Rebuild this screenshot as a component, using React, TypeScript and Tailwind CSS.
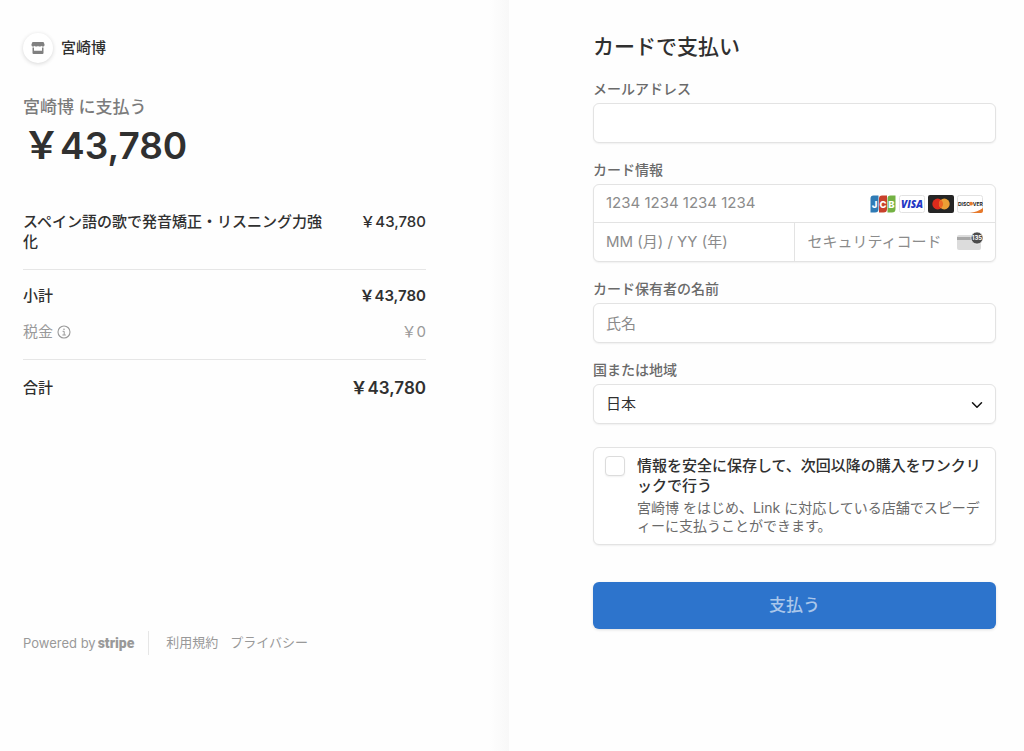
import React, { useState } from 'react';
import { ChevronDown } from 'lucide-react';

const fieldClass =
  'w-full h-10 rounded-md border border-[#e3e3e3] bg-white px-3 text-[15px] text-[#303030] shadow-[0_1px_2px_rgba(0,0,0,0.06)] outline-none placeholder:text-[#8b8b8b]';
const labelClass = 'block mb-1 text-[14px] leading-5 font-medium text-[#6a6a6a]';

const StoreIcon: React.FC = () => (
  <svg viewBox="0 0 14 14" className="w-[14px] h-[14px]" aria-hidden="true">
    <path
      d="M1.500 1h11l1 2.200V4c0 .9-.7 1.600-1.600 1.600-.7 0-1.300-.3-1.600-.9-.3.6-.9.9-1.600.9s-1.400-.3-1.700-.9c-.3.6-1 .9-1.700.9s-1.300-.3-1.600-.9c-.3.6-.9.9-1.600.9C1.200 5.600.5 4.900.5 4v-.8L1.500 1Z"
      fill="#808080"
    />
    <path d="M1.500 6.600H3v3.200h8V6.600h1.500V12a1 1 0 0 1-1 1h-9a1 1 0 0 1-1-1V6.600Z" fill="#808080" />
  </svg>
);

const InfoIcon: React.FC = () => (
  <svg viewBox="0 0 14 14" className="w-[14px] h-[14px]" fill="none" stroke="#999" aria-hidden="true">
    <circle cx="7" cy="7" r="6" strokeWidth="1.1" />
    <path d="M5.600 6.300h1.600v3.600M5.400 10h3.400" strokeWidth="1" />
    <circle cx="7" cy="4.200" r=".8" fill="#999" stroke="none" />
  </svg>
);

const JcbIcon: React.FC = () => (
  <svg viewBox="0 0 26 18" className="w-[26px] h-[18px]" role="img" aria-label="JCB">
    <path d="M3.500.5h5V14A3.500 3.500 0 0 1 5 17.500H.5V3.500a3 3 0 0 1 3-3Z" fill="#2f7bb5" />
    <path d="M12 .5h5V14a3.500 3.500 0 0 1-3.500 3.500H9v-14a3 3 0 0 1 3-3Z" fill="#c8412b" />
    <path d="M20.500.5h5V14a3.500 3.500 0 0 1-3.500 3.500h-4.500v-14a3 3 0 0 1 3-3Z" fill="#73b143" />
    <g fill="#fff" fontFamily="Inter, sans-serif" fontWeight="800" fontSize="9.500" textAnchor="middle">
      <text x="4.500" y="12.500">J</text>
      <text x="13" y="12.500">C</text>
      <text x="21.500" y="12.500">B</text>
    </g>
  </svg>
);

const VisaIcon: React.FC = () => (
  <svg viewBox="0 0 26 18" className="w-[26px] h-[18px]" role="img" aria-label="Visa">
    <rect x=".5" y=".5" width="25" height="17" rx="2" fill="#fff" stroke="#e2e2e2" />
    <text x="13" y="12.700" fill="#2337c4" fontFamily="Open Sans, sans-serif" fontWeight="800" fontStyle="italic" fontSize="10" textAnchor="middle">
      VISA
    </text>
  </svg>
);

const MastercardIcon: React.FC = () => (
  <svg viewBox="0 0 26 18" className="w-[26px] h-[18px]" role="img" aria-label="Mastercard">
    <rect width="26" height="18" rx="2" fill="#252525" />
    <circle cx="9.700" cy="9" r="5.400" fill="#dc2b1c" />
    <circle cx="16.300" cy="9" r="5.400" fill="#eb9f35" />
    <path d="M13 4.730a5.400 5.400 0 0 1 0 8.540 5.400 5.400 0 0 1 0-8.540Z" fill="#ec6523" />
  </svg>
);

const DiscoverIcon: React.FC = () => (
  <svg viewBox="0 0 26 18" className="w-[26px] h-[18px]" role="img" aria-label="Discover">
    <rect x=".5" y=".5" width="25" height="17" rx="2" fill="#fff" stroke="#e2e2e2" />
    <path d="M26 13v3a2 2 0 0 1-2 2H13c5-.8 9.500-2.400 13-5Z" fill="#e7792b" />
    <g fill="#222" fontFamily="Inter, sans-serif" fontWeight="700" fontSize="5">
      <text x="1" y="10.500">DISC</text>
      <text x="15.800" y="10.500">VER</text>
    </g>
    <circle cx="14" cy="8.700" r="1.900" fill="#e7792b" />
  </svg>
);

const CvcIcon: React.FC = () => (
  <svg viewBox="0 0 28 20" className="w-7 h-5" aria-hidden="true">
    <rect x="1" y="3" width="24" height="15" rx="2" fill="#dcdcdc" />
    <rect x="1" y="5" width="24" height="3" fill="#a8a8a8" />
    <circle cx="21" cy="6" r="6" fill="#4d4d4d" stroke="#fff" strokeWidth=".6" />
    <text x="21" y="8.300" fill="#fff" fontFamily="Inter, sans-serif" fontWeight="700" fontSize="6" textAnchor="middle">
      135
    </text>
  </svg>
);

const OrderSummary: React.FC = () => (
  <section className="flex flex-col pt-8 pb-24 pl-[23px] pr-[83px] bg-[linear-gradient(to_left,#f8f8f8,#fefefe_20px)]">
    <header className="flex items-center gap-2 h-8">
      <span className="flex items-center justify-center w-[30px] h-[30px] rounded-full bg-white shadow-[0_1px_4px_rgba(0,0,0,0.16)]">
        <StoreIcon />
      </span>
      <span className="text-[15px] font-medium text-[#303030]">宮崎博</span>
    </header>

    <p className="mt-[31px] text-[17px] leading-6 font-medium text-[#7b7b7b]">宮崎博 に支払う</p>
    <p className="mt-[5px] text-[37px] leading-[44px] font-semibold text-[#303030]">￥43,780</p>

    <div className="mt-11 flex gap-6 justify-between pb-[17px] border-b border-[#e6e6e6] text-[15px] leading-5 font-medium text-[#303030]">
      <span>スペイン語の歌で発音矯正・リスニング力強化</span>
      <span className="shrink-0">￥43,780</span>
    </div>

    <div className="pt-4 pb-[17px] border-b border-[#e6e6e6] text-[15px] leading-5">
      <div className="flex justify-between text-[#303030]">
        <span className="font-medium">小計</span>
        <span className="font-semibold">￥43,780</span>
      </div>
      <div className="mt-4 flex justify-between text-[#999]">
        <span className="flex items-center gap-1">
          税金
          <InfoIcon />
        </span>
        <span>￥0</span>
      </div>
    </div>

    <div className="mt-[18px] flex justify-between leading-5 text-[#303030]">
      <span className="text-[15px] font-medium">合計</span>
      <span className="text-[17px] font-semibold">￥43,780</span>
    </div>

    <footer className="mt-auto flex items-center text-[13px] text-[#999]">
      <a href="#stripe" className="flex items-baseline gap-[2px] pr-[14px]">
        Powered by <span className="font-['Roboto',sans-serif] text-[14px] font-black">stripe</span>
      </a>
      <span className="flex items-center gap-3 h-6 pl-[17px] border-l border-[#e6e6e6]">
        <a href="#terms">利用規約</a>
        <a href="#privacy">プライバシー</a>
      </span>
    </footer>
  </section>
);

const PaymentForm: React.FC = () => {
  const [country, setCountry] = useState('JP');
  const [saveInfo, setSaveInfo] = useState(false);

  return (
    <form className="pt-[33px] pb-12 pl-[84px] pr-7" onSubmit={(e) => e.preventDefault()}>
      <h1 className="mb-[18px] text-[21px] leading-7 font-medium text-[#303030]">カードで支払い</h1>

      <label htmlFor="email" className={labelClass}>メールアドレス</label>
      <input id="email" type="email" className={fieldClass} />

      {/* Card details */}
      <fieldset className="mt-[17px]">
        <legend className={labelClass}>カード情報</legend>
        <div className="rounded-md border border-[#e3e3e3] bg-white shadow-[0_1px_2px_rgba(0,0,0,0.06)] text-[15px]">
          <div className="flex items-center h-[38px] px-3 border-b border-[#e3e3e3]">
            <input
              aria-label="カード番号"
              placeholder="1234 1234 1234 1234"
              className="flex-1 min-w-0 outline-none placeholder:text-[#8b8b8b]"
            />
            <div className="flex gap-[3px]">
              <JcbIcon />
              <VisaIcon />
              <MastercardIcon />
              <DiscoverIcon />
            </div>
          </div>
          <div className="grid grid-cols-2 h-[38px]">
            <input
              aria-label="有効期限"
              placeholder="MM (月) / YY (年)"
              className="min-w-0 px-3 border-r border-[#e3e3e3] outline-none placeholder:text-[#8b8b8b]"
            />
            <div className="flex items-center pl-[13px] pr-[11px]">
              <input
                aria-label="セキュリティコード"
                placeholder="セキュリティコード"
                className="flex-1 min-w-0 outline-none placeholder:text-[#8b8b8b]"
              />
              <CvcIcon />
            </div>
          </div>
        </div>
      </fieldset>

      <div className="mt-[17px]">
        <label htmlFor="name" className={labelClass}>カード保有者の名前</label>
        <input id="name" placeholder="氏名" className={fieldClass} />
      </div>

      <div className="mt-[17px]">
        <label htmlFor="country" className={labelClass}>国または地域</label>
        <div className="relative">
          <select
            id="country"
            value={country}
            onChange={(e) => setCountry(e.target.value)}
            className={`${fieldClass} appearance-none`}
          >
            <option value="JP">日本</option>
          </select>
          <ChevronDown className="absolute right-[10px] top-3 w-[18px] h-[18px] text-[#111] pointer-events-none" />
        </div>
      </div>

      {/* Save info */}
      <label className="mt-[23px] flex gap-3 rounded-md border border-[#e3e3e3] bg-white shadow-[0_1px_2px_rgba(0,0,0,0.06)] pt-2 pb-[9px] pl-[11px] pr-3">
        <input
          type="checkbox"
          checked={saveInfo}
          onChange={(e) => setSaveInfo(e.target.checked)}
          className="w-5 h-5 shrink-0 appearance-none rounded border border-[#dcdcdc] bg-white shadow-[0_1px_2px_rgba(0,0,0,0.06)] checked:bg-[#2d74cc]"
        />
        <span>
          <span className="block text-[15px] leading-5 font-medium text-[#303030]">
            情報を安全に保存して、次回以降の購入をワンクリックで行う
          </span>
          <span className="block mt-[3px] text-[14px] leading-[18px] text-[#6a6a6a]">
            宮崎博 をはじめ、Link に対応している店舗でスピーディーに支払うことができます。
          </span>
        </span>
      </label>

      <button
        type="submit"
        className="mt-[37px] w-full h-[47px] rounded-md bg-[#2d74cc] text-[17px] font-medium text-[#abc7ea] shadow-[0_1px_3px_rgba(0,0,0,0.12)]"
      >
        支払う
      </button>
    </form>
  );
};

export default function App() {
  return (
    <main
      lang="ja"
      className="grid grid-cols-[509fr_515fr] min-h-screen bg-[#fefefe] font-['Inter','Noto_Sans_CJK_JP',sans-serif]"
    >
      <OrderSummary />
      <PaymentForm />
    </main>
  );
}
